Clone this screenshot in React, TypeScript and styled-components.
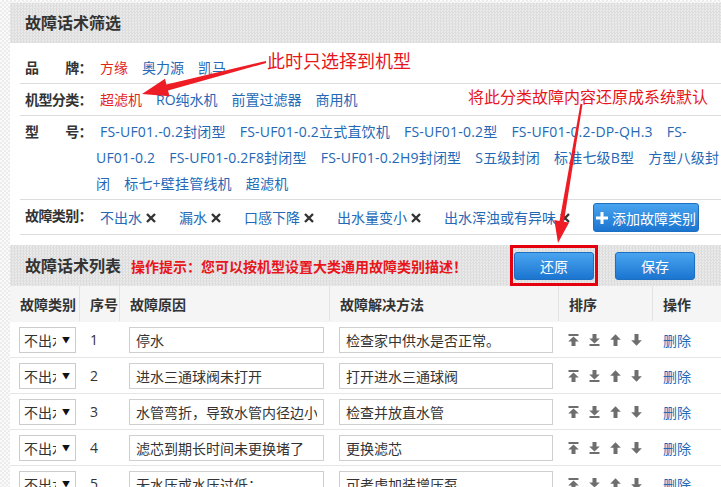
import React from "react";
import styled, { createGlobalStyle } from "styled-components";

const GlobalStyle = createGlobalStyle`
  html, body { margin: 0; padding: 0; }
  body {
    width: 721px;
    height: 487px;
    overflow: hidden;
    font-family: "Open Sans", "Noto Sans CJK SC", sans-serif;
    color: #333;
    background-color: #f6f6f6;
    background-image: repeating-conic-gradient(#ececec 0 25%, #fafafa 0 50%);
    background-size: 4px 4px;
  }
`;

const Page = styled.div`
  position: relative;
  padding: 3px 0 0 10px;
  width: 711px;
`;

const Panel = styled.div`
  background: #fff;
  width: 711px;
`;

const HeaderBand = styled.div<{ $h: number }>`
  height: ${(p) => p.$h}px;
  display: flex;
  align-items: center;
  padding: 0 26px 0 15px;
  background-color: #e5e5e5;
  background-image: repeating-conic-gradient(#dddddd 0 25%, #eaeaea 0 50%);
  background-size: 3px 3px;
`;

const Title = styled.h2`
  margin: 0;
  font-size: 16px;
  font-weight: 700;
  color: #333;
  line-height: 20px;
`;

const Tip = styled.span`
  margin-left: 10px;
  color: #e8151b;
  font-size: 14px;
  font-weight: 700;
`;

const HeaderActions = styled.div`
  margin-left: auto;
  display: flex;
  align-items: center;
  gap: 17px;
  height: 100%;
`;

const Mark = styled.div`
  box-sizing: border-box;
  height: 100%;
  border: 3px solid #e5000f;
  padding: 4px 1px 3px;
`;

const BlueButton = styled.button<{ $w: number; $h: number }>`
  box-sizing: border-box;
  width: ${(p) => p.$w}px;
  height: ${(p) => p.$h}px;
  border: 1px solid #1c6fc1;
  border-radius: 3px;
  background: linear-gradient(#49a4f0, #1b75d0);
  color: #fff;
  font-family: inherit;
  font-size: 14px;
  display: inline-flex;
  align-items: center;
  justify-content: center;
  gap: 4px;
  padding: 0;
  cursor: pointer;
`;

const FilterBody = styled.div`
  padding: 9px 0 10px 10px;
`;

const FilterRow = styled.div`
  display: grid;
  grid-template-columns: 71px 1fr;
  align-items: start;
  padding: 3px 0 2px 5px;
  border-bottom: 1px solid #dcdcdc;
  line-height: 26px;
  font-size: 14px;
`;

const Label = styled.div`
  display: flex;
  justify-content: space-between;
  width: 67px;
  white-space: nowrap;
  letter-spacing: -0.6px;
  font-weight: 700;
  color: #333;
`;

const Values = styled.div`
  & > a:first-child { margin-left: 4px; }
`;

const Link = styled.a<{ $active?: boolean; $wide?: boolean }>`
  color: ${(p) => (p.$active ? "#e1251b" : "#2468b6")};
  text-decoration: none;
  margin-right: 14px;
  letter-spacing: ${(p) => (p.$wide ? "0.2px" : "0")};
  cursor: pointer;
`;

const NoWrap = styled.span`
  white-space: nowrap;
`;

const CategoryList = styled.div`
  display: flex;
  align-items: center;
  gap: 23px;
  min-height: 29px;
  padding-left: 4px;
`;

const Category = styled.span`
  display: inline-flex;
  align-items: center;
  gap: 4px;
  color: #2468b6;
`;

const Table = styled.div`
  font-size: 14px;
`;

const Row = styled.div<{ $head?: boolean }>`
  display: grid;
  grid-template-columns: 70px 40px 210px 229px 94px 1fr;
  height: 36px;
  box-sizing: border-box;
  background: ${(p) => (p.$head ? "#f5f5f5" : "#fff")};
  border-bottom: 1px solid ${(p) => (p.$head ? "#f5f5f5" : "#e6e6e6")};
  font-weight: ${(p) => (p.$head ? 700 : 400)};
`;

const Cell = styled.div<{ $head?: boolean }>`
  display: flex;
  align-items: center;
  gap: 11px;
  padding-left: 10px;
  border-right: 1px solid ${(p) => (p.$head ? "#e3e3e3" : "transparent")};
  &:last-child { border-right: none; }
`;

const SortGroup = styled.div`
  display: flex;
  align-items: center;
  gap: 10px;
  margin-left: -1px;
`;

const FakeSelect = styled.div`
  box-sizing: border-box;
  margin-left: -1px;
  width: 57px;
  height: 26px;
  border: 1px solid #cccccc;
  display: flex;
  align-items: center;
  padding-left: 4px;
  background: #fff;
`;

const SelectText = styled.span`
  width: 32px;
  overflow: hidden;
  white-space: nowrap;
`;

const SelectCaret = styled.span`
  margin-left: 6px;
  font-size: 8px;
  color: #111;
`;

const TextInput = styled.input<{ $w: number }>`
  box-sizing: border-box;
  margin-left: -1px;
  width: ${(p) => p.$w}px;
  height: 26px;
  border: 1px solid #cfcfcf;
  padding: 0 6px;
  font-family: inherit;
  font-size: 14px;
  color: #333;
  outline: none;
`;

const DeleteLink = styled.a`
  color: #2468b6;
  text-decoration: none;
  cursor: pointer;
`;

const Note = styled.div<{ $size: number }>`
  position: absolute;
  color: #e6161c;
  font-size: ${(p) => p.$size}px;
  line-height: ${(p) => p.$size}px;
  white-space: nowrap;
  font-family: "Noto Sans CJK SC", sans-serif;
`;

const Overlay = styled.svg`
  position: absolute;
  left: 0;
  top: 0;
  pointer-events: none;
`;

const CloseIcon = () => (
  <svg width="10" height="10" viewBox="0 0 10 10">
    <path d="M1 1L9 9M9 1L1 9" stroke="#333" strokeWidth="2.4" />
  </svg>
);

const PlusIcon = () => (
  <svg width="12" height="12" viewBox="0 0 12 12">
    <path d="M6 0V12M0 6H12" stroke="#fff" strokeWidth="3" />
  </svg>
);

type SortKind = "top" | "bottom" | "up" | "down";
const SortIcon = ({ kind }: { kind: SortKind }) => (
  <svg width="11" height="12" viewBox="0 0 11 12" fill="#6e6e6e">
    {kind === "top" && (
      <>
        <rect x="0.5" y="0" width="10" height="2" />
        <path d="M5.5 2.6L0.2 7.4H3.5V12H7.5V7.4H10.8Z" />
      </>
    )}
    {kind === "bottom" && (
      <>
        <path d="M3.5 0H7.5V4.6H10.8L5.5 9.4L0.2 4.6H3.5Z" />
        <rect x="0.5" y="10" width="10" height="2" />
      </>
    )}
    {kind === "up" && <path d="M5.5 0.3L0.2 5.8H3.5V12H7.5V5.8H10.8Z" />}
    {kind === "down" && <path d="M3.5 0H7.5V6.2H10.8L5.5 11.7L0.2 6.2H3.5Z" />}
  </svg>
);

const brands = [
  { name: "方缘", active: true },
  { name: "奥力源" },
  { name: "凯马" },
];
const types = [
  { name: "超滤机", active: true },
  { name: "RO纯水机" },
  { name: "前置过滤器" },
  { name: "商用机" },
];
const models = [
  "FS-UF01.-0.2封闭型",
  "FS-UF01-0.2立式直饮机",
  "FS-UF01-0.2型",
  "FS-UF01-0.2-DP-QH.3",
  "FS-UF01-0.2",
  "FS-UF01-0.2F8封闭型",
  "FS-UF01-0.2H9封闭型",
  "S五级封闭",
  "标准七级B型",
  "方型八级封闭",
  "标七+壁挂管线机",
  "超滤机",
];
const categories = ["不出水", "漏水", "口感下降", "出水量变小", "出水浑浊或有异味"];
const rows = [
  ["停水", "检查家中供水是否正常。"],
  ["进水三通球阀未打开", "打开进水三通球阀"],
  ["水管弯折，导致水管内径边小", "检查并放直水管"],
  ["滤芯到期长时间未更换堵了", "更换滤芯"],
  ["无水压或水压过低：", "可考虑加装增压泵"],
];

const ModelName = ({ name }: { name: string }) => {
  const i = name.indexOf("-");
  if (i < 0) return <>{name}</>;
  return (
    <>
      {name.slice(0, i + 1)}
      <NoWrap>{name.slice(i + 1)}</NoWrap>
    </>
  );
};

export default function App() {
  return (
    <>
      <GlobalStyle />
      <Page>
        <Panel>
          <HeaderBand $h={40}>
            <Title>故障话术筛选</Title>
          </HeaderBand>
          <FilterBody>
            <FilterRow>
              <Label>
                <span>品</span>
                <span>牌：</span>
              </Label>
              <Values>
                {brands.map((b) => (
                  <Link key={b.name} $active={b.active}>
                    {b.name}
                  </Link>
                ))}
              </Values>
            </FilterRow>
            <FilterRow>
              <Label>
                <span>机型分类：</span>
              </Label>
              <Values>
                {types.map((t) => (
                  <Link key={t.name} $active={t.active}>
                    {t.name}
                  </Link>
                ))}
              </Values>
            </FilterRow>
            <FilterRow>
              <Label>
                <span>型</span>
                <span>号：</span>
              </Label>
              <Values>
                {models.map((m) => (
                  <React.Fragment key={m}>
                    <Link $wide>
                      <ModelName name={m} />
                    </Link>
                    <wbr />
                  </React.Fragment>
                ))}
              </Values>
            </FilterRow>
            <FilterRow>
              <Label>
                <span>故障类别：</span>
              </Label>
              <CategoryList>
                {categories.map((c) => (
                  <Category key={c}>
                    {c}
                    <CloseIcon />
                  </Category>
                ))}
                <BlueButton $w={106} $h={29}>
                  <PlusIcon />
                  添加故障类别
                </BlueButton>
              </CategoryList>
            </FilterRow>
          </FilterBody>

          <HeaderBand $h={41}>
            <Title>故障话术列表</Title>
            <Tip>操作提示：您可以按机型设置大类通用故障类别描述！</Tip>
            <HeaderActions>
              <Mark>
                <BlueButton $w={80} $h={28}>还原</BlueButton>
              </Mark>
              <BlueButton $w={80} $h={28}>保存</BlueButton>
            </HeaderActions>
          </HeaderBand>

          <Table>
            <Row $head>
              <Cell $head>故障类别</Cell>
              <Cell $head>序号</Cell>
              <Cell $head>故障原因</Cell>
              <Cell $head>故障解决方法</Cell>
              <Cell $head>排序</Cell>
              <Cell $head>操作</Cell>
            </Row>
            {rows.map((r, i) => (
              <Row key={i}>
                <Cell>
                  <FakeSelect>
                    <SelectText>不出水</SelectText>
                    <SelectCaret>▼</SelectCaret>
                  </FakeSelect>
                </Cell>
                <Cell>{i + 1}</Cell>
                <Cell>
                  <TextInput $w={195} readOnly value={r[0]} />
                </Cell>
                <Cell>
                  <TextInput $w={214} readOnly value={r[1]} />
                </Cell>
                <Cell>
                  <SortGroup>
                    <SortIcon kind="top" />
                    <SortIcon kind="bottom" />
                    <SortIcon kind="up" />
                    <SortIcon kind="down" />
                  </SortGroup>
                </Cell>
                <Cell>
                  <DeleteLink>删除</DeleteLink>
                </Cell>
              </Row>
            ))}
          </Table>
        </Panel>

        <Note $size={18} style={{ left: 267, top: 51 }}>此时只选择到机型</Note>
        <Note $size={16} style={{ left: 468, top: 88 }}>将此分类故障内容还原成系统默认</Note>
        <Overlay width="721" height="487" viewBox="0 0 721 487">
          <polygon
            fill="#ee1c25"
            points="265.8,61 166.4,84.6 165,78.8 142,94 169.5,96.2 168,90.4 266.2,63"
          />
          <polygon
            fill="#ee1c25"
            points="580.5,103.8 559.5,220.9 554.3,220 558,243 569.1,222.6 563.9,221.7 582.5,104.2"
          />
        </Overlay>
      </Page>
    </>
  );
}
